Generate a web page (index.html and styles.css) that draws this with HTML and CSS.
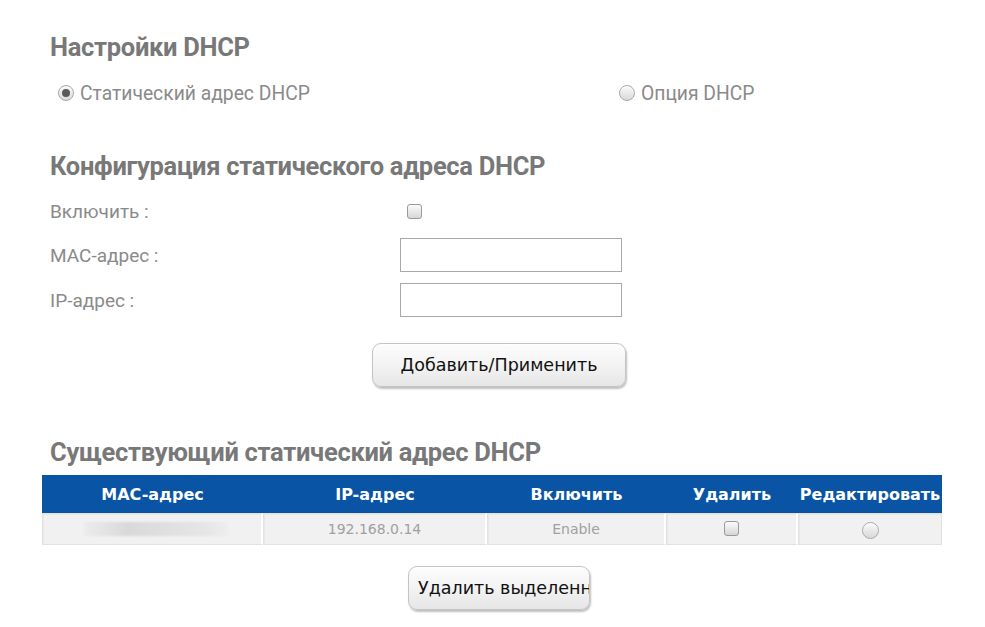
FILE: index.html
```html
<!DOCTYPE html>
<html lang="ru">
<head>
<meta charset="utf-8">
<link rel="stylesheet" href="styles.css">
</head>
<body>
<div class="page">
  <h2 class="title t1">Настройки DHCP</h2>
  <div class="mode-row">
    <label class="mode mode-static"><span class="radio checked"></span>Статический адрес DHCP</label>
    <label class="mode mode-option"><span class="radio"></span>Опция DHCP</label>
  </div>

  <h2 class="title t2">Конфигурация статического адреса DHCP</h2>
  <div class="form-row row-enable">
    <span class="label">Включить :</span>
    <span class="check check-enable"></span>
  </div>
  <div class="form-row row-mac">
    <span class="label">MAC-адрес :</span>
    <span class="field"></span>
  </div>
  <div class="form-row row-ip">
    <span class="label">IP-адрес :</span>
    <span class="field"></span>
  </div>
  <div class="btn-row">
    <button class="btn btn-apply">Добавить/Применить</button>
  </div>

  <h2 class="title t3">Существующий статический адрес DHCP</h2>
</div>
<table class="list">
  <thead>
    <tr>
      <th class="c1">MAC-адрес</th>
      <th class="c2">IP-адрес</th>
      <th class="c3">Включить</th>
      <th class="c4">Удалить</th>
      <th class="c5">Редактировать</th>
    </tr>
  </thead>
  <tbody>
    <tr>
      <td><span class="blur"></span></td>
      <td>192.168.0.14</td>
      <td>Enable</td>
      <td><span class="check"></span></td>
      <td><span class="radio small"></span></td>
    </tr>
  </tbody>
</table>
<div class="btn-row bottom">
  <button class="btn btn-del"><span>Удалить выделенн</span></button>
</div>
</body>
</html>
```

FILE: styles.css
```css
html, body {
  margin: 0;
  padding: 0;
  background: #fff;
}
body {
  width: 985px;
  height: 627px;
  overflow: hidden;
  font-family: Roboto, "Noto Sans", sans-serif;
}
.page {
  padding-left: 50px;
}
.title {
  margin: 0;
  font-family: Roboto, "Noto Sans", sans-serif;
  font-weight: 700;
  font-size: 25.5px;
  line-height: 30px;
  color: #787878;
  letter-spacing: -0.3px;
}
.t1 { padding-top: 32px; }
.t2 { margin-top: 47px; }
.t3 { margin-top: 50px; }

.mode-row {
  display: flex;
  margin-top: 20px;
  height: 22px;
  align-items: center;
  font-size: 19.3px;
  color: #8a8a8a;
}
.mode {
  display: flex;
  align-items: center;
  gap: 6px;
}
.mode-static {
  padding-left: 8px;
  width: 561px;
}
.radio {
  display: inline-block;
  width: 14px;
  height: 14px;
  border-radius: 50%;
  border: 1px solid #a8a8a8;
  background: linear-gradient(#fafafa, #d8d8d8);
  box-shadow: inset 0 1px 1px #fff;
  position: relative;
}
.radio.checked::after {
  content: "";
  position: absolute;
  left: 3px;
  top: 3px;
  width: 8px;
  height: 8px;
  border-radius: 50%;
  background: #5a5a5a;
}
.check {
  display: inline-block;
  width: 13px;
  height: 13px;
  border: 1px solid #9a9a9a;
  border-radius: 3px;
  background: linear-gradient(#fbfbfb, #d6d6d6);
}
.form-row {
  display: flex;
  align-items: center;
  height: 34px;
  font-size: 19px;
  color: #8a8a8a;
}
.row-enable { margin-top: 16px; height: 28px; }
.row-mac { margin-top: 13px; }
.row-ip { margin-top: 11px; }
.label {
  width: 350px;
}
.check-enable { margin-left: 7px; }
.field {
  display: block;
  width: 220px;
  height: 32px;
  border: 1px solid #a9a9a9;
  background: #fff;
}
.btn-row {
  display: flex;
  margin-top: 26px;
  padding-left: 322px;
}
.btn {
  font-family: "DejaVu Sans", Verdana, sans-serif;
  font-size: 17.5px;
  color: #111;
  border: 1px solid #c4c4c4;
  border-radius: 9px;
  background: linear-gradient(#fdfdfd 0%, #f3f3f3 50%, #e6e6e6 100%);
  box-shadow: 1px 2px 2px rgba(0,0,0,0.25), inset 0 1px 0 #fff;
  padding: 0;
}
.btn-apply {
  width: 254px;
  height: 44px;
}
.list {
  margin: 8px 0 0 42px;
  width: 900px;
  border-collapse: separate;
  border-spacing: 0;
  font-family: "DejaVu Sans", Verdana, sans-serif;
  table-layout: fixed;
}
.list th {
  background: #0a54a5;
  color: #fff;
  font-size: 16px;
  font-weight: 700;
  height: 38px;
  padding: 0;
  text-align: center;
  white-space: nowrap;
}
.c1 { width: 221px; }
.c2 { width: 224px; }
.c3 { width: 179px; }
.c4 { width: 132px; }
.c5 { width: 144px; }
.list td {
  background: #f1f1f1;
  border: 1px solid #e2e2e2;
  border-right: 2px solid #fff;
  box-shadow: inset 1px 1px 0 #e8e8e8;
  height: 30px;
  padding: 0;
  text-align: center;
  color: #a0a0a0;
  font-size: 14px;
}
.list td:last-child { border-right: 1px solid #e2e2e2; }
.list td .check { vertical-align: -1px; }
.list td .radio.small { width: 15px; height: 15px; vertical-align: -6px; }
.blur {
  display: inline-block;
  width: 144px;
  height: 14px;
  margin-left: 8px;
  background: linear-gradient(90deg, #ececec 0%, #e3e3e3 15%, #d9d9d9 30%, #e0e0e0 60%, #e6e6e6 85%, #eeeeee 100%);
  filter: blur(1px);
  vertical-align: -2px;
}
.bottom {
  margin-top: 21px;
  padding-left: 408px;
}
.btn-del {
  width: 182px;
  height: 44px;
  overflow: hidden;
  text-align: left;
  padding-left: 9px;
  white-space: nowrap;
}
```
